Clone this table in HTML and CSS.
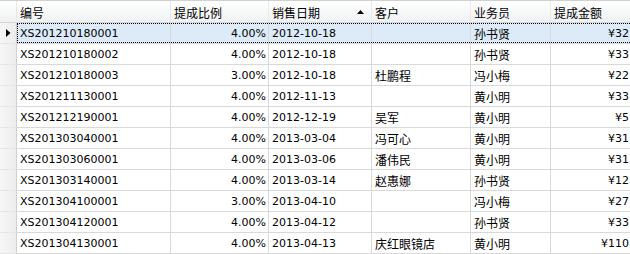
FILE: index.html
```html
<!DOCTYPE html>
<html>
<head>
<meta charset="utf-8">
<link rel="stylesheet" href="styles.css">
</head>
<body>
<div class="grid">
  <div class="row head">
    <div class="rh"></div>
    <div class="c zh">编号</div>
    <div class="c zh">提成比例</div>
    <div class="c zh sort"><span>销售日期</span><svg class="arrow" width="7" height="4" viewBox="0 0 7 4"><path d="M3.5 0 L7 4 L0 4 Z" fill="#000"/></svg></div>
    <div class="c zh">客户</div>
    <div class="c zh">业务员</div>
    <div class="c zh">提成金额</div>
  </div>
  <div class="row sel">
    <div class="rh"><svg width="5" height="8" viewBox="0 0 5 8"><path d="M0 0 L4.5 4 L0 8 Z" fill="#000"/></svg></div>
    <div class="c">XS201210180001</div><div class="c r">4.00%</div><div class="c">2012-10-18</div><div class="c zh"></div><div class="c zh">孙书贤</div><div class="c r">¥32</div>
  </div>
  <div class="row">
    <div class="rh"></div>
    <div class="c">XS201210180002</div><div class="c r">4.00%</div><div class="c">2012-10-18</div><div class="c zh"></div><div class="c zh">孙书贤</div><div class="c r">¥33</div>
  </div>
  <div class="row">
    <div class="rh"></div>
    <div class="c">XS201210180003</div><div class="c r">3.00%</div><div class="c">2012-10-18</div><div class="c zh">杜鹏程</div><div class="c zh">冯小梅</div><div class="c r">¥22</div>
  </div>
  <div class="row">
    <div class="rh"></div>
    <div class="c">XS201211130001</div><div class="c r">4.00%</div><div class="c">2012-11-13</div><div class="c zh"></div><div class="c zh">黄小明</div><div class="c r">¥33</div>
  </div>
  <div class="row">
    <div class="rh"></div>
    <div class="c">XS201212190001</div><div class="c r">4.00%</div><div class="c">2012-12-19</div><div class="c zh">吴军</div><div class="c zh">黄小明</div><div class="c r">¥5</div>
  </div>
  <div class="row">
    <div class="rh"></div>
    <div class="c">XS201303040001</div><div class="c r">4.00%</div><div class="c">2013-03-04</div><div class="c zh">冯可心</div><div class="c zh">黄小明</div><div class="c r">¥31</div>
  </div>
  <div class="row">
    <div class="rh"></div>
    <div class="c">XS201303060001</div><div class="c r">4.00%</div><div class="c">2013-03-06</div><div class="c zh">潘伟民</div><div class="c zh">黄小明</div><div class="c r">¥31</div>
  </div>
  <div class="row">
    <div class="rh"></div>
    <div class="c">XS201303140001</div><div class="c r">4.00%</div><div class="c">2013-03-14</div><div class="c zh">赵惠娜</div><div class="c zh">孙书贤</div><div class="c r">¥12</div>
  </div>
  <div class="row">
    <div class="rh"></div>
    <div class="c">XS201304100001</div><div class="c r">3.00%</div><div class="c">2013-04-10</div><div class="c zh"></div><div class="c zh">冯小梅</div><div class="c r">¥27</div>
  </div>
  <div class="row">
    <div class="rh"></div>
    <div class="c">XS201304120001</div><div class="c r">4.00%</div><div class="c">2013-04-12</div><div class="c zh"></div><div class="c zh">孙书贤</div><div class="c r">¥33</div>
  </div>
  <div class="row">
    <div class="rh"></div>
    <div class="c">XS201304130001</div><div class="c r">4.00%</div><div class="c">2013-04-13</div><div class="c zh">庆红眼镜店</div><div class="c zh">黄小明</div><div class="c r">¥110</div>
  </div>
</div>
</body>
</html>
```

FILE: styles.css
```css
* { box-sizing: border-box; }
html, body { margin: 0; padding: 0; background: #fff; }
body {
  width: 630px;
  height: 254px;
  overflow: hidden;
  font-family: "DejaVu Sans", "Noto Sans CJK SC", sans-serif;
  font-size: 11px;
  color: #000;
}
.grid {
  border-top: 1px solid #d0d0d0;
  width: 630px;
}
.row {
  display: grid;
  grid-template-columns: 17px 154px 98px 103px 99px 80px 79px;
  height: 21px;
  position: relative;
}
.row.head { height: 22px; }
.c, .rh {
  display: flex;
  align-items: center;
  border-right: 1px solid #d9d9d9;
  border-bottom: 1px solid #d9d9d9;
  padding: 0 2px 0 3px;
  white-space: nowrap;
  overflow: hidden;
}
.c:last-child { border-right: none; padding-right: 1px; }
.r { justify-content: flex-end; }
.zh { font-size: 12px; }
.rh {
  padding: 0;
  justify-content: center;
  background: linear-gradient(to right, #f7f7f7, #ececec);
  border-right-color: #d0d0d0;
  border-bottom-color: #e6e6e6;
}
.head .c, .head .rh {
  background: linear-gradient(#ffffff, #f7f8f9 50%, #eef0f2);
  border-right-color: #e9e9e9;
  border-bottom-color: #d5d5d5;
  padding-top: 1px;
}
.head .c:first-of-type { padding-left: 3px; }
.sort { justify-content: space-between; padding-right: 7px; }
.arrow { display: block; }
.sel .c { background: #dcebf7; }
.sel::after {
  content: "";
  position: absolute;
  left: 17px;
  top: 0;
  right: 0;
  bottom: 1px;
  border: 1px dotted #000;
  border-right: none;
  pointer-events: none;
}
```
